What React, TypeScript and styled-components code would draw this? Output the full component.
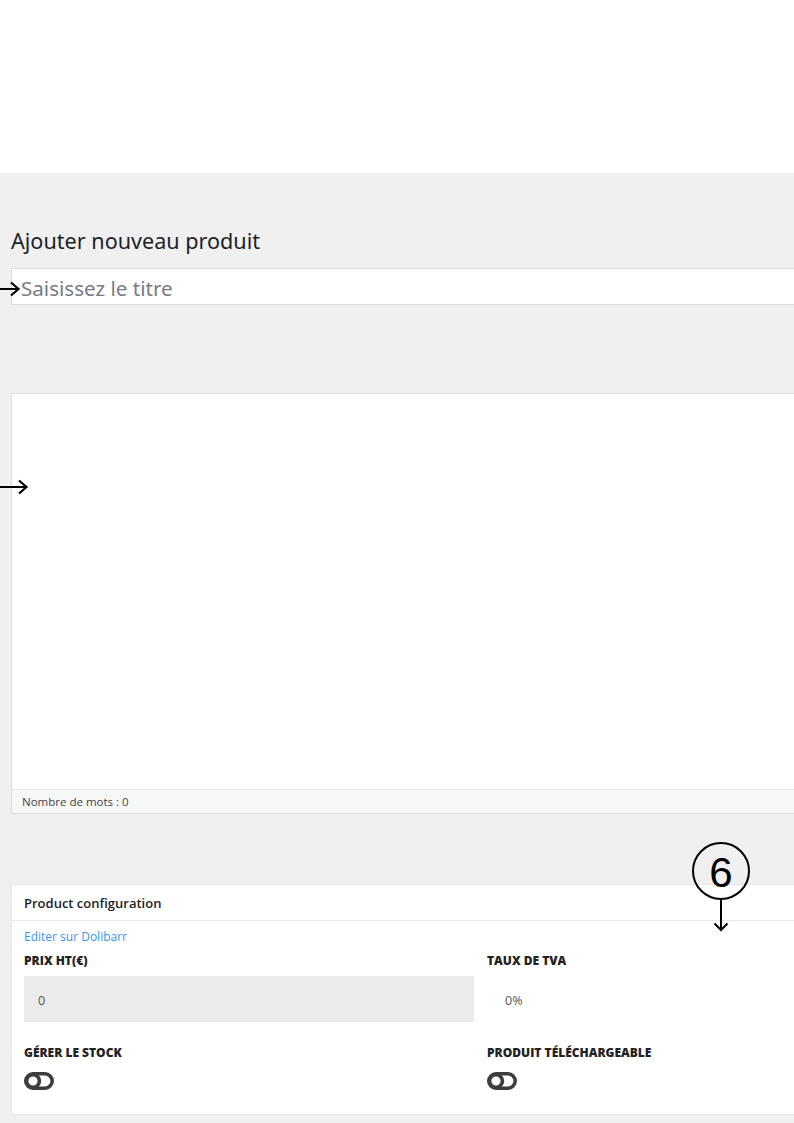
import React from "react";
import styled, { createGlobalStyle } from "styled-components";

const GlobalStyle = createGlobalStyle`
  html, body {
    margin: 0;
    padding: 0;
    background: #fff;
  }
  body {
    font-family: "Open Sans", "Noto Sans", sans-serif;
    color: #1d2327;
    overflow: hidden;
  }
`;

const Page = styled.div`
  position: relative;
  width: 794px;
  height: 1123px;
  overflow: hidden;
`;

const TopBlank = styled.div`
  height: 173px;
  background: #fff;
`;

const Body = styled.div`
  background: #f0f0f1;
  height: 950px;
  padding-left: 11px;
  box-sizing: border-box;
`;

const Content = styled.div`
  width: 800px;
  display: flex;
  flex-direction: column;
`;

const Heading = styled.h1`
  margin: 54px 0 0;
  font-family: "Noto Sans", "Open Sans", sans-serif;
  font-weight: 400;
  font-size: 21.6px;
  line-height: 28px;
  color: #1d2327;
`;

const TitleInput = styled.div`
  margin-top: 13px;
  height: 37px;
  box-sizing: border-box;
  background: #fff;
  border: 1px solid #dcdcde;
  border-right: none;
  padding: 3px 0 0 9px;
  display: flex;
  align-items: center;
  font-family: "Noto Sans", "Open Sans", sans-serif;
  font-size: 20.6px;
  color: #787c82;
`;

const Editor = styled.div`
  margin-top: 88px;
  height: 421px;
  background: #fff;
  border: 1px solid #dcdcde;
  border-right: none;
  box-sizing: border-box;
  display: flex;
  flex-direction: column;
`;

const EditorArea = styled.div`
  flex: 1;
`;

const StatusBar = styled.div`
  height: 23px;
  background: #f6f7f7;
  border-top: 1px solid #e2e4e7;
  padding-left: 10px;
  display: flex;
  align-items: center;
  font-size: 11.5px;
  color: #3c434a;
`;

const Panel = styled.div`
  margin-top: 70px;
  height: 231px;
  background: #fff;
  border: 1px solid #e6e6e8;
  border-right: none;
  box-sizing: border-box;
  display: flex;
  flex-direction: column;
`;

const PanelHeader = styled.div`
  height: 36px;
  box-sizing: border-box;
  border-bottom: 1px solid #eaeaec;
  padding-left: 12px;
  display: flex;
  align-items: center;
  font-size: 13px;
  font-weight: 600;
  color: #1d2327;
`;

const PanelBody = styled.div`
  padding: 7px 0 0 12px;
  width: 783px;
  box-sizing: border-box;
`;

const Link = styled.a`
  display: block;
  font-size: 12px;
  line-height: 17px;
  color: #3399ee;
  text-decoration: none;
`;

const Grid = styled.div`
  margin-top: 8px;
  display: grid;
  grid-template-columns: 450px 1fr;
  column-gap: 13px;
  row-gap: 23px;
`;

const Field = styled.div`
  display: flex;
  flex-direction: column;
`;

const Label = styled.div`
  font-size: 12px;
  font-weight: 800;
  line-height: 15px;
  text-transform: uppercase;
  color: #222;
`;

const ValueBox = styled.div<{ $filled?: boolean }>`
  margin-top: 8px;
  height: 46px;
  box-sizing: border-box;
  background: ${(p) => (p.$filled ? "#ebebeb" : "transparent")};
  padding: 2px 0 0 ${(p) => (p.$filled ? "14px" : "18px")};
  display: flex;
  align-items: center;
  font-size: 12.5px;
  color: #555;
`;

const ToggleWrap = styled.div`
  margin-top: 11px;
  height: 20px;
  display: flex;
  align-items: center;
`;

const Annotation = styled.svg`
  position: absolute;
  overflow: visible;
`;

const Toggle = () => (
  <svg width="30" height="20" viewBox="0 0 30 20">
    <rect x="1.8" y="2.8" width="26.4" height="14.4" rx="7.2" fill="none" stroke="#3d3d3d" strokeWidth="3.6" />
    <circle cx="9" cy="10" r="6.4" fill="#fff" stroke="#3d3d3d" strokeWidth="3.6" />
  </svg>
);

const Arrow = ({ x, y, len }: { x: number; y: number; len: number }) => (
  <Annotation style={{ left: x, top: y - 8 }} width={len} height="16" viewBox={`0 0 ${len} 16`}>
    <path d={`M0 8 H${len - 1.5}`} stroke="#000" strokeWidth="2" fill="none" />
    <path d={`M${len - 9} 1.5 L${len - 1.5} 8 L${len - 9} 14.5`} stroke="#000" strokeWidth="2.2" fill="none" />
  </Annotation>
);

export default function App() {
  return (
    <Page>
      <GlobalStyle />
      <TopBlank />
      <Body>
        <Content>
          <Heading>Ajouter nouveau produit</Heading>
          <TitleInput>Saisissez le titre</TitleInput>
          <Editor>
            <EditorArea />
            <StatusBar>Nombre de mots : 0</StatusBar>
          </Editor>
          <Panel>
            <PanelHeader>Product configuration</PanelHeader>
            <PanelBody>
              <Link href="#">Editer sur Dolibarr</Link>
              <Grid>
                <Field>
                  <Label>Prix HT(€)</Label>
                  <ValueBox $filled>0</ValueBox>
                </Field>
                <Field>
                  <Label>Taux de TVA</Label>
                  <ValueBox>0%</ValueBox>
                </Field>
                <Field>
                  <Label>Gérer le stock</Label>
                  <ToggleWrap>
                    <Toggle />
                  </ToggleWrap>
                </Field>
                <Field>
                  <Label>Produit téléchargeable</Label>
                  <ToggleWrap>
                    <Toggle />
                  </ToggleWrap>
                </Field>
              </Grid>
            </PanelBody>
          </Panel>
        </Content>
      </Body>

      <Arrow x={0} y={289} len={20} />
      <Arrow x={0} y={487} len={28} />

      <Annotation style={{ left: 692, top: 842 }} width="58" height="90" viewBox="0 0 58 90">
        <circle cx="29" cy="29" r="28" fill="none" stroke="#000" strokeWidth="2" />
        <text x="29" y="44.5" textAnchor="middle" fontFamily="'Liberation Sans', Arial, sans-serif" fontSize="42" fill="#000">
          6
        </text>
        <path d="M29 57 V88" stroke="#000" strokeWidth="2" fill="none" />
        <path d="M22.5 81.5 L29 88 L35.5 81.5" stroke="#000" strokeWidth="2" fill="none" />
      </Annotation>
    </Page>
  );
}
